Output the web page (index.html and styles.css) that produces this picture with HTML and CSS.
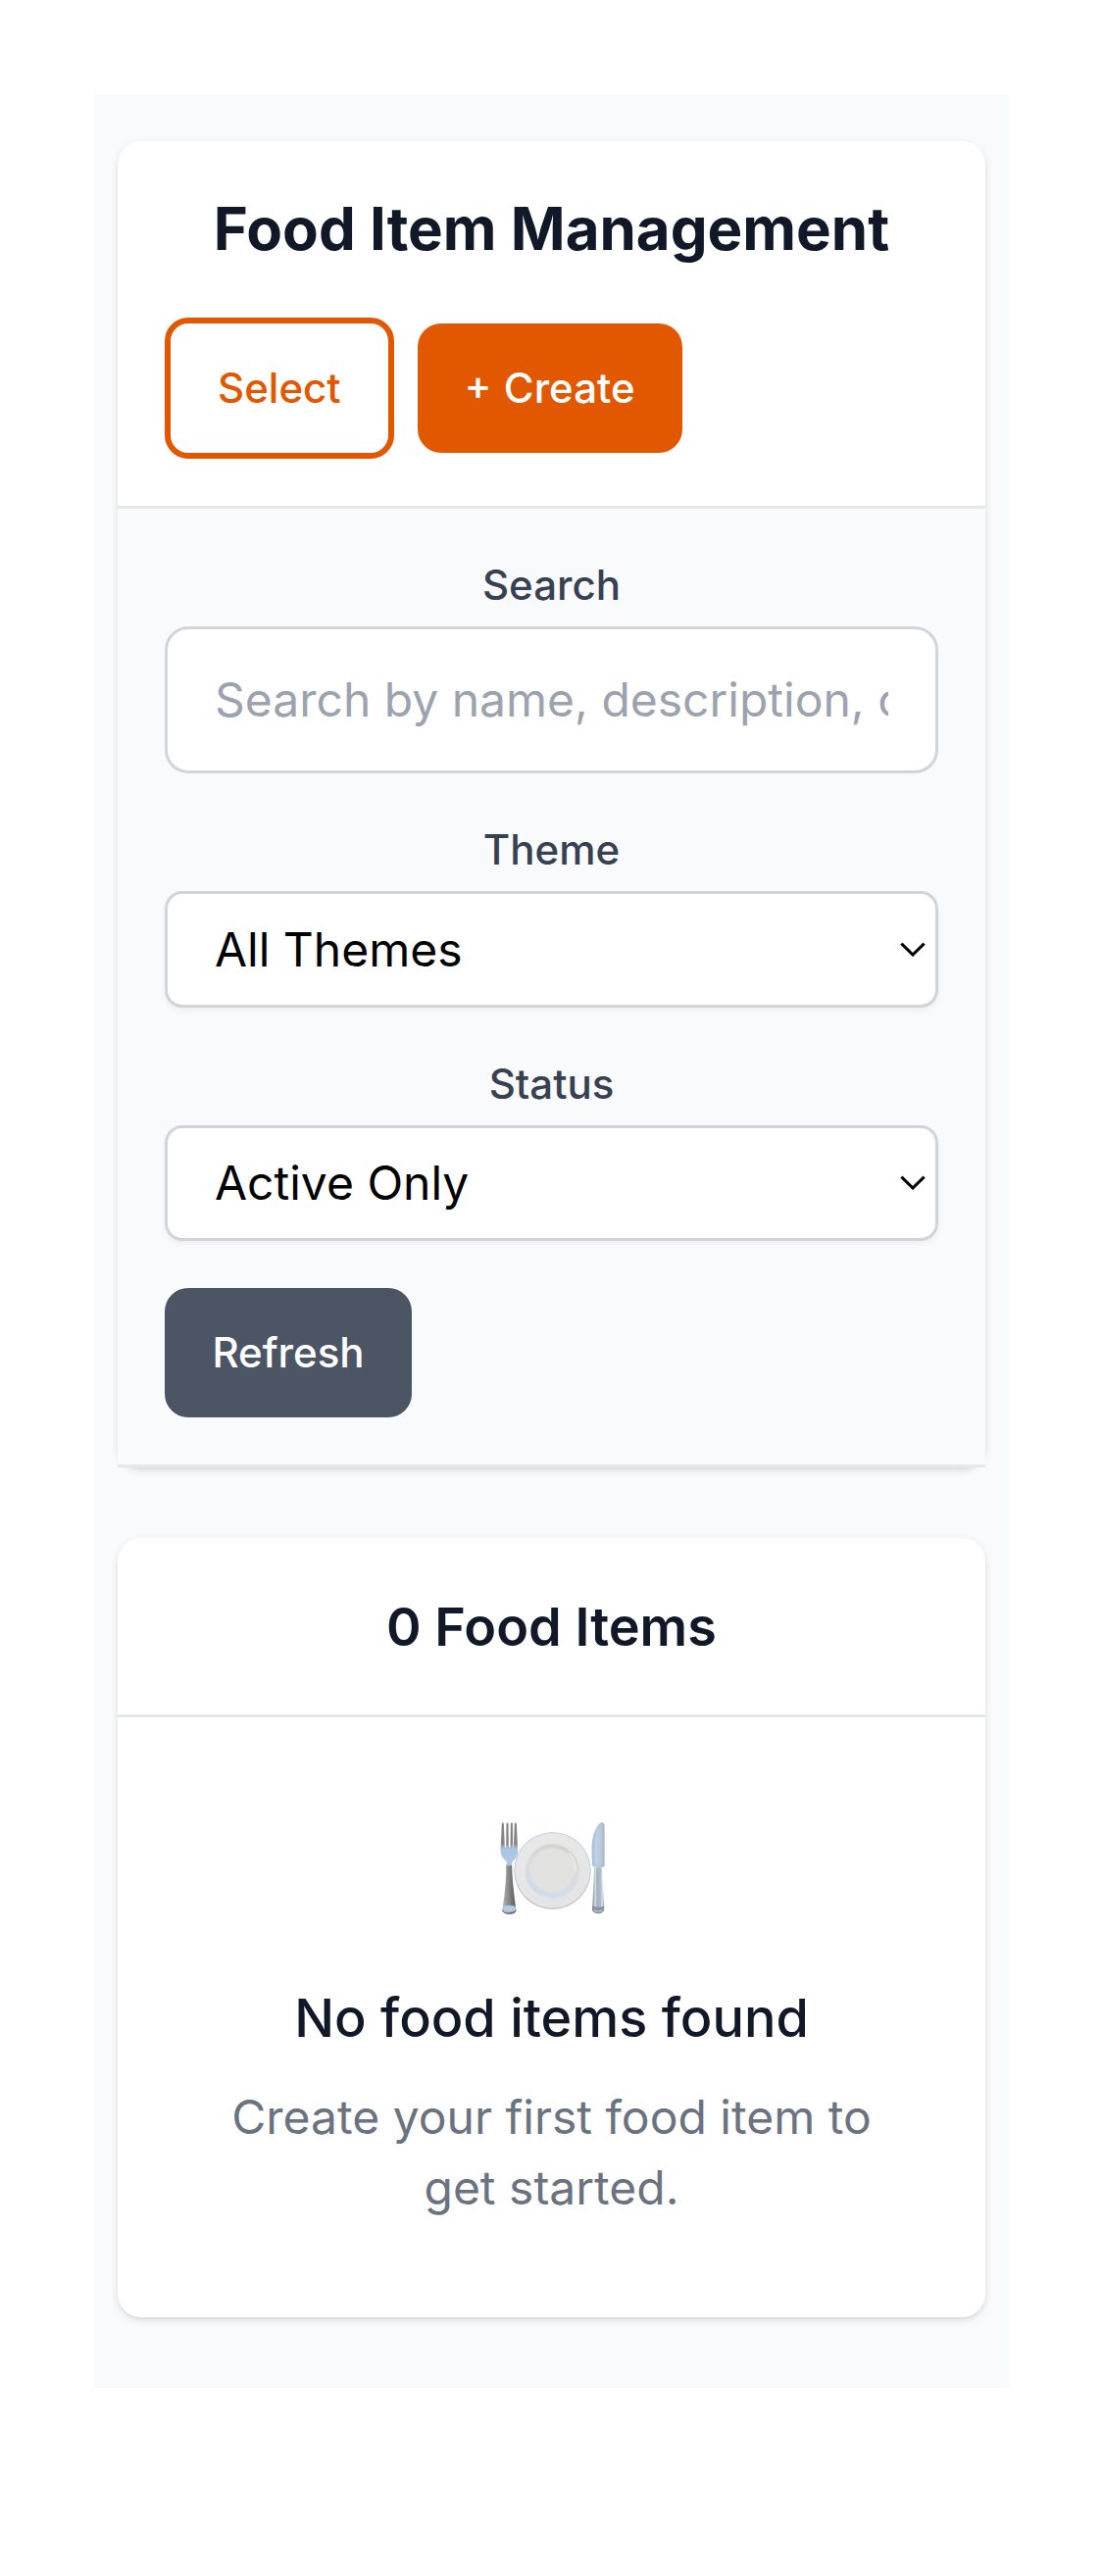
FILE: index.html
```html
<!DOCTYPE html>
<html lang="en">
<head>
<meta charset="utf-8">
<title>Food Item Management</title>
<link rel="stylesheet" href="styles.css">
</head>
<body>
<main class="page">
  <section class="card">
    <header class="card-header">
      <h1 class="title">Food Item Management</h1>
      <div class="actions">
        <button class="btn btn-outline" type="button">Select</button>
        <button class="btn btn-primary" type="button">+ Create</button>
      </div>
    </header>
    <div class="filters">
      <div class="field">
        <label class="label" for="search">Search</label>
        <input class="input" id="search" type="text" placeholder="Search by name, description, or theme...">
      </div>
      <div class="field">
        <label class="label" for="theme">Theme</label>
        <div class="select-wrap">
          <select class="select select-theme" id="theme"><option>All Themes</option></select>
          <svg class="chevron" viewBox="0 0 26 15" aria-hidden="true"><path d="M1.4 1.6 13 13 24.6 1.6"/></svg>
        </div>
      </div>
      <div class="field">
        <label class="label" for="status">Status</label>
        <div class="select-wrap">
          <select class="select" id="status"><option>Active Only</option></select>
          <svg class="chevron" viewBox="0 0 26 15" aria-hidden="true"><path d="M1.4 1.6 13 13 24.6 1.6"/></svg>
        </div>
      </div>
      <button class="btn btn-dark" type="button">Refresh</button>
    </div>
  </section>

  <section class="card">
    <header class="card-header">
      <h2 class="subtitle">0 Food Items</h2>
    </header>
    <div class="empty">
      <svg class="plate" viewBox="67.5 84 360 360" aria-hidden="true">
        <defs>
          <linearGradient id="rim" x1="0" y1="0" x2="0.3" y2="1">
            <stop offset="0" stop-color="#dde0e4"/><stop offset=".15" stop-color="#e8e8e8"/><stop offset="1" stop-color="#e4e4e4"/>
          </linearGradient>
          <linearGradient id="well" x1="0.6" y1="0" x2="0.4" y2="1">
            <stop offset="0" stop-color="#d3d2d0"/><stop offset=".45" stop-color="#dcdcdd"/><stop offset="1" stop-color="#cddcf0"/>
          </linearGradient>
          <linearGradient id="handle" x1="0" y1="0" x2="1" y2="0">
            <stop offset="0" stop-color="#b5b5b5"/><stop offset=".45" stop-color="#8a8a8a"/><stop offset="1" stop-color="#58585a"/>
          </linearGradient>
          <linearGradient id="tines" x1="0" y1="118" x2="0" y2="236" gradientUnits="userSpaceOnUse">
            <stop offset="0" stop-color="#7f8185"/><stop offset=".55" stop-color="#8b8583"/><stop offset=".68" stop-color="#a9c3e2"/><stop offset="1" stop-color="#b5cae4"/>
          </linearGradient>
          <linearGradient id="blade" x1="0" y1="0" x2="1" y2="0">
            <stop offset="0" stop-color="#a3bedd"/><stop offset=".35" stop-color="#c3d2e2"/><stop offset=".8" stop-color="#b8c5d3"/><stop offset="1" stop-color="#94a2b2"/>
          </linearGradient>
          <linearGradient id="grip" x1="0" y1="0" x2="1" y2="0">
            <stop offset="0" stop-color="#7f858b"/><stop offset=".25" stop-color="#d3dfeb"/><stop offset=".4" stop-color="#a5b0bb"/><stop offset=".7" stop-color="#b2c0ce"/><stop offset=".85" stop-color="#d4e2f2"/><stop offset="1" stop-color="#8b949e"/>
          </linearGradient>
        </defs>
        <circle cx="249" cy="265.5" r="117.5" fill="#aeb1b4"/>
        <circle cx="249" cy="264.5" r="116" fill="#d5e2f2"/>
        <circle cx="249" cy="265.5" r="113.5" fill="url(#rim)"/>
        <circle cx="249" cy="267" r="83" fill="url(#well)"/>
        <circle cx="249" cy="264" r="68" fill="#e1e1e0"/>
        <path d="M170 265q2 42 34 62" fill="none" stroke="#c6daf3" stroke-width="4" opacity=".8"/>
        <path d="M299 212q20 20 21 54" fill="none" stroke="#eceae8" stroke-width="6"/>
        <path d="M107 247h18q0 44 12 135q1 16-20 16t-21-16q13-82 11-135z" fill="url(#handle)"/>
        <path d="M98 374q19-6 37 0l2 11q-2 7-20 7t-20-7z" fill="#b3cae6"/>
        <path d="M96 385q2 12 21 12t20-12" fill="none" stroke="#626367" stroke-width="3"/>
        <path d="M94 121q3-5 6 0l3 73h4l1-73q3-5 6 0l1 73h5l1-73q3-5 6 0l1 73h2l3-73q3-5 6 0l4 86q-1 20-15 29-4 4-4 14h-14q0-12-5-16-14-9-15-29z" fill="url(#tines)"/>
        <path d="M94 197h47q0 22-14 31l-5 20-8 1-4-20q-16-9-16-32z" fill="#aac5e5" opacity=".7"/>
        <path d="M398 117q10 0 10 12v120q-4 8-18 8-17 0-20-10l-1-52q2-59 29-78z" fill="url(#blade)"/>
        <path d="M397 121q7 0 7 12v111q-5 7-15 7-11 0-15-7v-48q3-50 23-75z" fill="none" stroke="#a5c4e6" stroke-width="3"/>
        <path d="M377 256h23l7 127q-1 14-18 14t-18-14z" fill="url(#grip)"/>
        <path d="M371 373q18 8 36 0v11q-3 12-18 12t-18-12z" fill="#85888c" opacity=".8"/>
        <path d="M376 387q13 5 25 0" fill="none" stroke="#aacbf0" stroke-width="4"/>
      </svg>
      <h3 class="empty-title">No food items found</h3>
      <p class="empty-text">Create your first food item to get started.</p>
    </div>
  </section>
</main>
</body>
</html>
```
FILE: styles.css
```css
*, *::before, *::after { box-sizing: border-box; }
body {
  margin: 0;
  padding: 96px;
  background: #fff;
  color: #111827;
  font-family: Inter, "Liberation Sans", sans-serif;
  font-size: 48px;
  line-height: 72px;
}
h1, h2, h3, p { margin: 0; }
button, input, select { font: inherit; margin: 0; }

.page {
  display: flex;
  flex-direction: column;
  gap: 72px;
  padding: 48px 24px 72px;
  background: #f9fafb;
}
.card {
  background: #fff;
  border-radius: 24px;
  box-shadow: 0 3px 9px rgba(0, 0, 0, .1), 0 3px 6px -3px rgba(0, 0, 0, .1);
}
.card-header {
  display: flex;
  flex-direction: column;
  gap: 48px;
  padding: 48px;
  border-bottom: 3px solid #e5e7eb;
}
.title, .subtitle, .empty-title { line-height: 82px; text-align: center; }
.title { padding-bottom: 2px; font-size: 60px; font-weight: 700; }
.subtitle { padding-top: 2px; font-size: 54px; font-weight: 600; }

.actions { display: flex; align-items: center; gap: 24px; }
.btn {
  padding: 36px 48px;
  border: 0;
  border-radius: 24px;
  font-size: 42px;
  font-weight: 500;
  line-height: 60px;
  color: #fff;
}
.btn-outline { border: 6px solid #e25800; background: #fff; color: #e25800; }
.btn-primary { background: #e25800; word-spacing: 1px; }
.btn-dark { align-self: flex-start; min-width: 252px; background: #4b5563; }

.filters {
  display: flex;
  flex-direction: column;
  gap: 48px;
  padding: 48px;
  background: #f9fafb;
  border-bottom: 3px solid #e5e7eb;
}
.field { display: flex; flex-direction: column; gap: 12px; }
.label {
  font-size: 42px;
  font-weight: 500;
  line-height: 60px;
  text-align: center;
  color: #374151;
}
.input {
  width: 100%;
  height: 150px;
  padding: 35px 48px 37px;
  border: 3px solid #d1d5db;
  border-radius: 24px;
  background: #fff;
}
.input::placeholder { color: #9ca3af; opacity: 1; }
.select-wrap { display: grid; align-items: center; }
.select-wrap > * { grid-area: 1 / 1; }
.select {
  appearance: none;
  width: 100%;
  height: 118.5px;
  padding: 0 48px;
  border: 3px solid #d1d5db;
  border-radius: 18px;
  background: #fff;
  color: #000;
  box-shadow: 0 3px 6px rgba(0, 0, 0, .05);
}
.select-theme { padding-top: 2px; }
.chevron {
  justify-self: end;
  width: 26px;
  height: 15px;
  margin-right: 13px;
  fill: none;
  stroke: #000;
  stroke-width: 3;
}

.empty {
  display: flex;
  flex-direction: column;
  align-items: center;
  padding: 96px;
  text-align: center;
}
.plate { width: 120px; height: 120px; margin-bottom: 48px; }
.empty-title { padding-top: 2px; margin-bottom: 24px; font-size: 54px; font-weight: 500; }
.empty-text { color: #6b7280; }
```
